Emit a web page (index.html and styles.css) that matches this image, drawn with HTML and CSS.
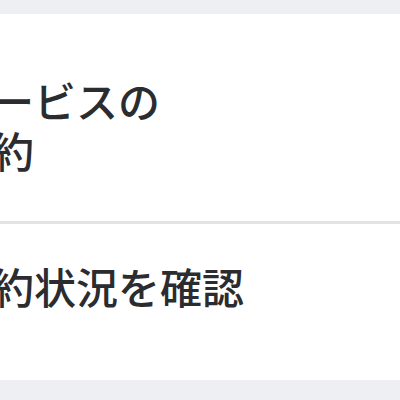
FILE: index.html
```html
<!DOCTYPE html>
<html lang="ja">

<head>
  <meta charset="UTF-8" />
  <meta name="viewport" content="width=device-width, initial-scale=1.0" />
  <title>予約</title>
  <link rel="stylesheet" href="styles.css">
</head>

<body>
  <div class="menu-card">
    <a class="menu-row menu-row-first" href="#">
      <span class="menu-title">サービスの<br>予約</span>
    </a>
    <a class="menu-row menu-row-second" href="#">
      <span class="menu-title">予約状況を確認</span>
    </a>
  </div>
</body>

</html>
```

FILE: styles.css
```css
body {
  margin: 0;
  background: #eeeff3;
  font-family: "Noto Sans CJK JP", "Noto Sans", sans-serif;
}

.menu-card {
  margin-top: 14px;
  background: #ffffff;
  display: flex;
  flex-direction: column;
}

.menu-row {
  display: block;
  color: #2b2c30;
  text-decoration: none;
}

.menu-row-first {
  padding: 61px 0 46px;
}

.menu-row-second {
  border-top: 3px solid #e2e3e7;
  padding: 37px 0 69px;
}

.menu-title {
  display: block;
  margin-left: -50px;
  font-size: 42px;
  line-height: 50px;
  font-weight: 500;
  white-space: nowrap;
}
```
